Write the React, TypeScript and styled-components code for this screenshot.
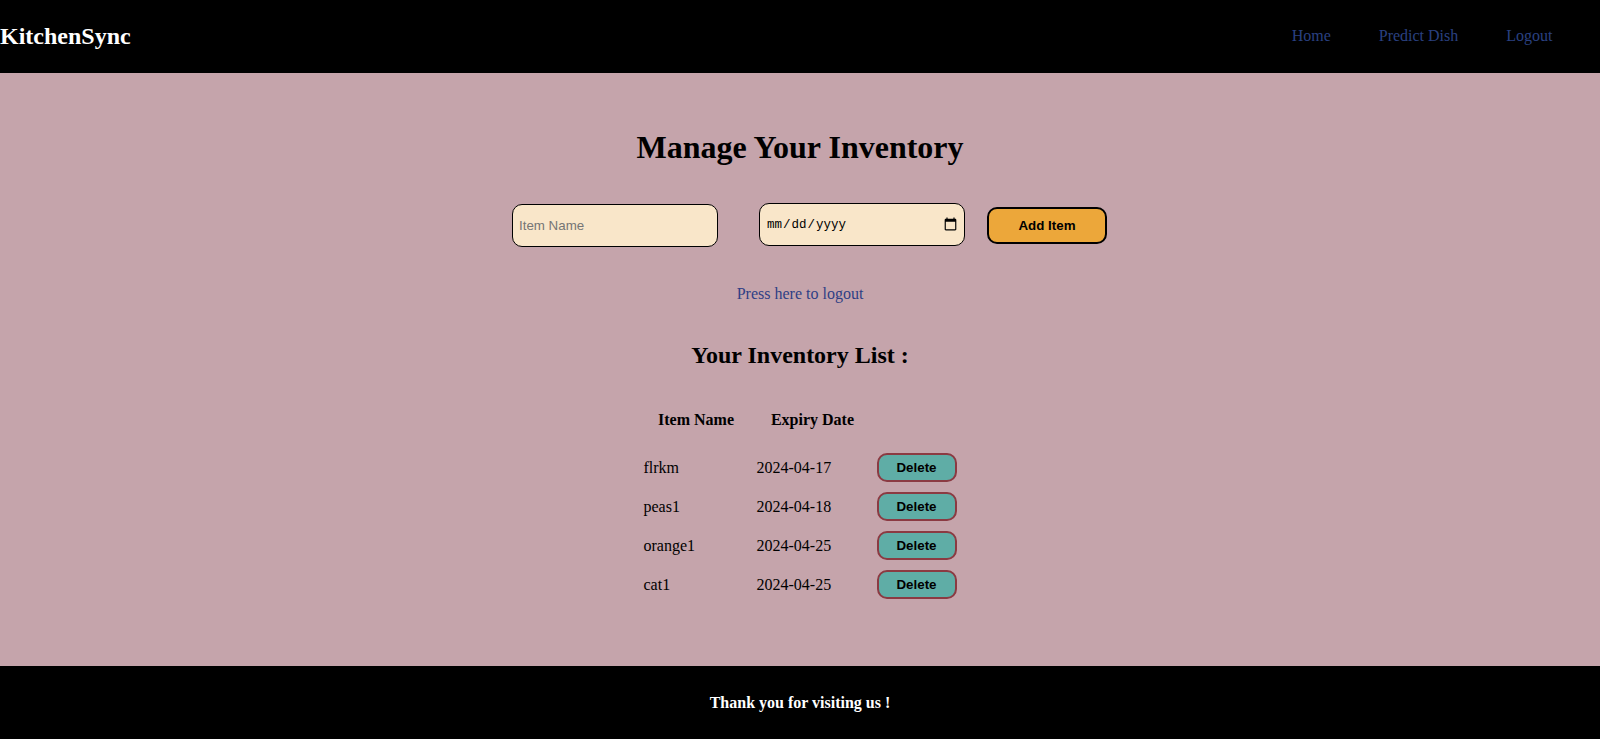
import React from "react";
import styled, { createGlobalStyle } from "styled-components";

const GlobalStyle = createGlobalStyle`
  html, body {
    margin: 0;
    padding: 0;
    background: #c5a4ab;
    font-family: "Liberation Serif", "Times New Roman", serif;
    font-size: 16px;
    color: #000;
  }
`;

const Page = styled.div`
  display: flex;
  flex-direction: column;
  min-height: 739px;
`;

const NavBar = styled.nav`
  display: flex;
  justify-content: space-between;
  align-items: center;
  height: 73px;
  padding-bottom: 2px;
  box-sizing: border-box;
  background: #000;
`;

const Brand = styled.div`
  padding-top: 2px;
  color: #fff;
  font-size: 24px;
  font-weight: bold;
`;

const NavLinks = styled.div`
  display: flex;
  gap: 48px;
  padding-right: 47.5px;
`;

const NavLink = styled.a`
  color: #2a4080;
  font-size: 16px;
  text-decoration: none;
`;

const Main = styled.main`
  flex: 1;
  display: flex;
  flex-direction: column;
  align-items: center;
`;

const Title = styled.h1`
  margin: 56px 0 0;
  font-size: 32px;
  line-height: 37px;
  font-weight: bold;
`;

const Form = styled.form`
  display: flex;
  align-items: center;
  margin-top: 37px;
  margin-left: 19px;
`;

const Field = styled.input`
  box-sizing: border-box;
  width: 206px;
  height: 43px;
  padding: 0 6px;
  border: 1px solid #000;
  border-radius: 10px;
  background: #f9e6c9;
  font-family: "Liberation Sans", Arial, sans-serif;
  font-size: 13.33px;

  &::placeholder {
    color: #757575;
  }
`;

const NameField = styled(Field)`
  margin-top: 1px;
  margin-right: 41px;
`;

const DateField = styled(Field)`
  margin-top: -1px;
  margin-right: 22px;
  font-family: "Liberation Mono", monospace;
  font-size: 12.5px;

  &::-webkit-calendar-picker-indicator {
    width: 15px;
    height: 15px;
    padding: 1px;
    margin-right: -1px;
  }
`;

const AddButton = styled.button`
  box-sizing: border-box;
  width: 120px;
  height: 37px;
  border: 2px solid #000;
  border-radius: 10px;
  background: #eca73a;
  color: #000;
  font-family: "Liberation Sans", Arial, sans-serif;
  font-size: 13.33px;
  font-weight: bold;
`;

const LogoutLink = styled.a`
  margin-top: 38px;
  color: #2f3f85;
  font-size: 16px;
  line-height: 18px;
  text-decoration: none;
`;

const ListTitle = styled.h2`
  margin: 38px 0 0;
  font-size: 24px;
  line-height: 28px;
  font-weight: bold;
`;

const InventoryTable = styled.table`
  margin-top: 30px;
  border-collapse: separate;
  border-spacing: 2px;
`;

const HeadCell = styled.th`
  padding: 10px 6px 18px 0;
  font-size: 16px;
  font-weight: bold;
  text-align: center;
`;

const Cell = styled.td<{ $width: number }>`
  width: ${(p) => p.$width}px;
  padding: 0;
  height: 37px;
  font-size: 16px;
`;

const DeleteButton = styled.button`
  display: block;
  box-sizing: border-box;
  width: 80px;
  height: 29px;
  border: 2px solid #8b3a42;
  border-radius: 10px;
  background: #5fada6;
  color: #000;
  font-family: "Liberation Sans", Arial, sans-serif;
  font-size: 13.33px;
  font-weight: bold;
`;

const Footer = styled.footer`
  display: flex;
  align-items: center;
  justify-content: center;
  height: 73px;
  background: #000;
  color: #fff;
  font-size: 16px;
  font-weight: bold;
`;

const items = [
  { name: "flrkm", expiry: "2024-04-17" },
  { name: "peas1", expiry: "2024-04-18" },
  { name: "orange1", expiry: "2024-04-25" },
  { name: "cat1", expiry: "2024-04-25" },
];

export default function App() {
  return (
    <Page>
      <GlobalStyle />
      <NavBar>
        <Brand>KitchenSync</Brand>
        <NavLinks>
          <NavLink href="#">Home</NavLink>
          <NavLink href="#">Predict Dish</NavLink>
          <NavLink href="#">Logout</NavLink>
        </NavLinks>
      </NavBar>
      <Main>
        <Title>Manage Your Inventory</Title>
        <Form onSubmit={(e) => e.preventDefault()}>
          <NameField type="text" placeholder="Item Name" />
          <DateField type="date" />
          <AddButton type="submit">Add Item</AddButton>
        </Form>
        <LogoutLink href="#">Press here to logout</LogoutLink>
        <ListTitle>Your Inventory List :</ListTitle>
        <InventoryTable>
          <thead>
            <tr>
              <HeadCell>Item Name</HeadCell>
              <HeadCell>Expiry Date</HeadCell>
              <HeadCell />
            </tr>
          </thead>
          <tbody>
            {items.map((item) => (
              <tr key={item.name}>
                <Cell $width={111}>{item.name}</Cell>
                <Cell $width={118}>{item.expiry}</Cell>
                <Cell $width={80}>
                  <DeleteButton type="button">Delete</DeleteButton>
                </Cell>
              </tr>
            ))}
          </tbody>
        </InventoryTable>
      </Main>
      <Footer>Thank you for visiting us !</Footer>
    </Page>
  );
}
